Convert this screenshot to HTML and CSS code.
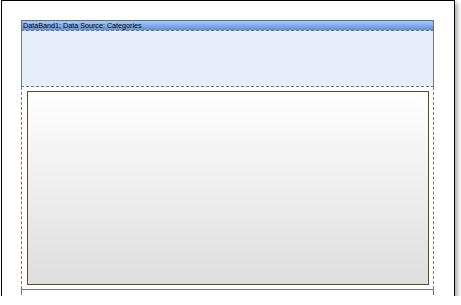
FILE: index.html
```html
<!DOCTYPE html>
<html lang="en">
  <head>
    <meta charset="UTF-8" />
    <title>Report Designer</title>
    <link rel="stylesheet" href="styles.css">
  </head>
  <body>
    <div class="page">
      <div class="band">
        <div class="band-header">DataBand1; Data Source: Categories</div>
        <div class="band-body"></div>
      </div>
      <div class="section">
        <div class="panel"></div>
      </div>
      <div class="footer"></div>
    </div>
  </body>
</html>
```

FILE: styles.css
```css
body {
  margin: 0;
  background-color: #fff;
  font-family: "Liberation Sans", Arial, sans-serif;
}

.page {
  box-sizing: border-box;
  margin-left: 1px;
  width: 454px;
  height: 296px;
  padding: 19px 20px 0 19px;
  border: 1px solid #000;
  border-bottom: none;
  background-color: #fff;
  box-shadow: 3px 3px 4px rgba(0, 0, 0, 0.3);
}

.band {
  width: 413px;
  box-sizing: border-box;
}

.band-header {
  box-sizing: border-box;
  height: 11px;
  padding-left: 1px;
  border: 1px solid #6e6e6e;
  border-bottom: 1px dashed #777;
  background: linear-gradient(#a9caf4, #5d90de);
  font-size: 7.2px;
  line-height: 9px;
  color: #000;
  white-space: nowrap;
}

.band-body {
  height: 55px;
  border-left: 1px solid #777;
  border-right: 1px solid #777;
  border-bottom: 1px dashed #777;
  background-color: #e6edfa;
}

.section {
  width: 413px;
  box-sizing: border-box;
  padding: 4px 4px 4px 5px;
  border-left: 1px dashed #777;
  border-right: 1px dashed #777;
}

.panel {
  height: 192px;
  border: 1px solid #5e4b1c;
  background: linear-gradient(#fff, #dedede);
}

.footer {
  width: 413px;
  box-sizing: border-box;
  height: 6px;
  border-top: 1px solid #777;
  border-left: 1px solid #777;
  border-right: 1px solid #777;
}
```
